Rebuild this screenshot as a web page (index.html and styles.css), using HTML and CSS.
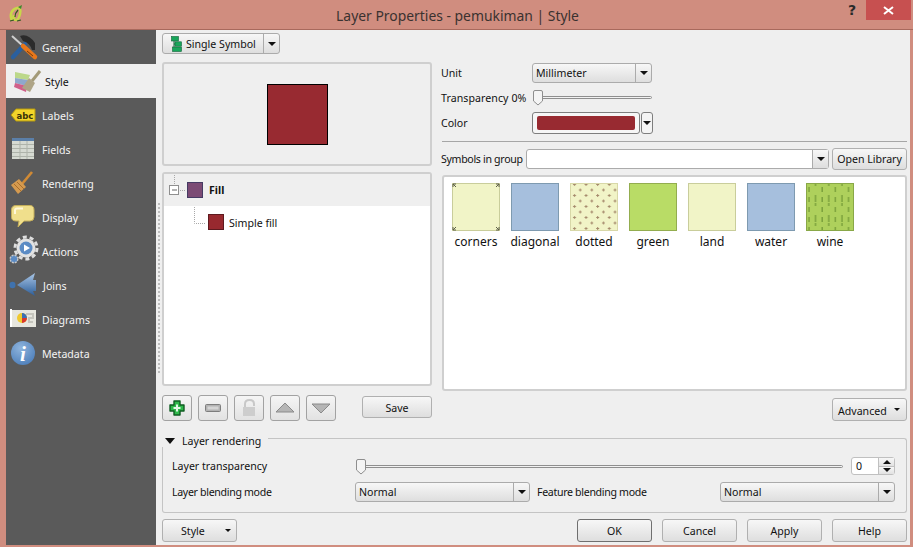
FILE: index.html
```html
<!DOCTYPE html>
<html lang="en">
<head>
<meta charset="utf-8">
<title>Layer Properties - pemukiman | Style</title>
<link rel="stylesheet" href="styles.css">
</head>
<body>
<div class="window">
  <header class="titlebar">
    <svg class="logo" width="16" height="18" viewBox="0 0 16 18"><path d="M4 15 C1 10 4 4 9 3 C12 2 13 5 12 9 C11 13 10 15 8 15 C6 15 5 13 6 10" fill="none" stroke="#c8d64a" stroke-width="2.600"/><path d="M7 12 C7 8 9 6 10 5 M2 16 L6 15 M9 16 L13 15" fill="none" stroke="#2f5a1e" stroke-width="1.200"/><path d="M10 2 L14 0 L13 4 Z" fill="#3c8a2e"/></svg>
    <span class="title">Layer Properties - pemukiman | Style</span>
    <span class="help-mark">?</span>
    <span class="close"><svg width="11" height="9" viewBox="0 0 11 9"><path d="M1 1 L10 8 M10 1 L1 8" stroke="#fff" stroke-width="2"/></svg></span>
  </header>
  <div class="body">
    <nav class="sidebar">
      <div class="nav-item"><svg class="nav-icon" viewBox="0 0 36 34"><path d="M6 6 L17 16" stroke="#cfcfcf" stroke-width="2"/><path d="M7 27 L19 14" stroke="#2a5f9e" stroke-width="4.500" stroke-linecap="round"/><path d="M14 6 Q22 3 29 13 L29 20 L26 20 Q24 13 17 11 Z" fill="#2b2b2b"/><path d="M17 16 L29 27" stroke="#e8771a" stroke-width="4.500" stroke-linecap="round"/><path d="M21 21 L27 26" stroke="#7a3b08"/></svg><span>General</span></div>
      <div class="nav-item active"><svg class="nav-icon" viewBox="0 0 36 34"><path d="M9 8 L24 11 L22 16 L9 14 Z" fill="#bcd88a"/><path d="M9 14 L22 16 L21 22 L9 19 Z" fill="#8fa8cc"/><path d="M9 19 L21 22 L20 28 L8 23 Z" fill="#d0608a"/><path d="M34 7 L26 17" stroke="#a39a78" stroke-width="3"/><path d="M23 14 L29 19 L24 28 L16 24 Z" fill="#aea486"/></svg><span>Style</span></div>
      <div class="nav-item"><svg class="nav-icon" viewBox="0 0 36 34"><path d="M5 17 L10 11 L29 11 L29 23 L10 23 Z" fill="#f4d52a" stroke="#b5990f"/><text class="abc" x="10.500" y="20.500">abc</text></svg><span>Labels</span></div>
      <div class="nav-item"><svg class="nav-icon" viewBox="0 0 36 34"><rect x="6" y="6" width="22" height="21" fill="#d6dad2"/><rect x="6" y="6" width="22" height="3" fill="#5b7fa8"/><path d="M6 12.500 H28 M6 16.500 H28 M6 20.500 H28 M6 24.500 H28 M14 9 V27 M21 9 V27" stroke="#aeb3aa"/></svg><span>Fields</span></div>
      <div class="nav-item"><svg class="nav-icon" viewBox="0 0 36 34"><path d="M26 6 L16 18" stroke="#d08a35" stroke-width="2.600"/><path d="M5 19 L13 13 L20 21 L12 28 Z" fill="#d59a4f"/><path d="M8 18 L15 25 M11 16 L18 23" stroke="#a96d2a"/></svg><span>Rendering</span></div>
      <div class="nav-item"><svg class="nav-icon" viewBox="0 0 36 34"><path d="M10 5.500 H24 Q28 5.500 28 10 V17 Q28 21 24 21 H18 L12 27 L13 21 H10 Q5.500 21 5.500 17 V10 Q5.500 5.500 10 5.500 Z" fill="#f0df8c" stroke="#c4ae5a"/><path d="M9 14 V10.500 Q9 8.500 11 8.500 H17" fill="none" stroke="#fff8d8" stroke-width="2"/></svg><span>Display</span></div>
      <div class="nav-item"><svg class="nav-icon" viewBox="0 0 36 34"><circle cx="20" cy="14" r="11" fill="none" stroke="#dedede" stroke-width="3" stroke-dasharray="4 2.900"/><circle cx="20" cy="14" r="9.500" fill="#e2e2e2"/><circle cx="20" cy="14" r="6.500" fill="#5b8bc4"/><path d="M18 10.500 L24 14 L18 17.500 Z" fill="#fff"/><circle cx="8" cy="25" r="3.800" fill="#5b8bc4" stroke="#c8c8c8" stroke-width="1.400" stroke-dasharray="2 1"/></svg><span>Actions</span></div>
      <div class="nav-item"><svg class="nav-icon" viewBox="0 0 36 34"><defs><linearGradient id="jg" x1="0" y1="0" x2="0" y2="1"><stop offset="0" stop-color="#a9c6e6"/><stop offset="1" stop-color="#2c5d99"/></linearGradient></defs><ellipse cx="6.500" cy="17" rx="3" ry="3.200" fill="#3f72ae"/><path d="M11 17 L29 5 L27 12 L30 12 L30 23 L27 23 L29 28 Z" fill="url(#jg)"/></svg><span class="joins-text">Joins</span></div>
      <div class="nav-item"><svg class="nav-icon" viewBox="0 0 36 34"><rect x="5" y="8" width="25" height="17" fill="#e6e6de"/><path d="M5 7 V25" stroke="#fff" stroke-width="2"/><path d="M20 12 H27 V16 H23 V20 H27" stroke="#c4c4bc" stroke-width="2" fill="none"/><circle cx="16" cy="16" r="5" fill="#f0c92e"/><path d="M16 16 V11 A5 5 0 0 1 21 16 Z" fill="#3b6fb5"/><path d="M16 16 H21 A5 5 0 0 1 16 21 Z" fill="#d9372c"/></svg><span>Diagrams</span></div>
      <div class="nav-item"><svg class="nav-icon" viewBox="0 0 36 34"><defs><radialGradient id="ig" cx=".4" cy=".3" r=".8"><stop offset="0" stop-color="#8fb4dd"/><stop offset="1" stop-color="#4a7cb8"/></radialGradient></defs><circle cx="17" cy="17" r="12" fill="url(#ig)"/><text class="info" x="17" y="25">i</text></svg><span>Metadata</span></div>
    </nav>
    <div class="splitter"><span class="grip"></span></div>
    <main class="main">
      <section class="top">
        <div class="left">
          <button class="combo type-btn"><span class="combo-text type-text"><svg width="11" height="16" viewBox="0 0 11 16"><path d="M3 3 V13 H6 M3 8 H6" fill="none" stroke="#11633a"/><rect x=".5" y=".5" width="7" height="4.500" fill="#18a65a" stroke="#11633a" stroke-width=".6"/><rect x="4" y="5.800" width="6.500" height="4.400" fill="#18a65a" stroke="#11633a" stroke-width=".6"/><rect x="1.500" y="11" width="9" height="4.500" fill="#18a65a" stroke="#11633a" stroke-width=".6"/></svg><span class="type-label">Single Symbol</span></span><span class="combo-arrow"><i class="arrow"></i></span></button>
          <div class="preview"><span class="big-swatch"></span></div>
          <div class="tree">
            <div class="tree-row row-fill">
              <svg width="19" height="32" viewBox="0 0 19 32"><path d="M5.500 1 V11 M11 16.500 H17" stroke="#a8a8a8" stroke-dasharray="1 1"/><rect x=".5" y="11.500" width="9" height="9" fill="#fff" stroke="#8f8f8f"/><path d="M3 16 H8" stroke="#666"/></svg>
              <span class="sw sw-fill"></span><b>Fill</b>
            </div>
            <div class="tree-row row-sub">
              <svg width="14" height="24" viewBox="0 0 14 24"><path d="M.5 1 V17.500 H11" fill="none" stroke="#a8a8a8" stroke-dasharray="1 1"/></svg>
              <span class="sw sw-simple"></span><span class="sub-text">Simple fill</span>
            </div>
          </div>
          <div class="tools">
            <button class="tool"><svg width="18" height="18" viewBox="0 0 18 18"><path d="M6 2 H12 V6 H16 V12 H12 V16 H6 V12 H2 V6 H6 Z" fill="#2eb84a" stroke="#0f5c22" stroke-width="1.400" stroke-linejoin="round"/><path d="M9 5.500 V12.500 M5.500 9 H12.500" stroke="#e4f7e6" stroke-width="2"/></svg></button>
            <button class="tool"><svg width="18" height="10" viewBox="0 0 18 10"><rect x="1.500" y="1.500" width="15" height="7" rx="1" fill="#b2b2b2" stroke="#7d7d7d"/><rect x="3.500" y="3.500" width="11" height="3" fill="#d4d4d4"/></svg></button>
            <button class="tool"><svg width="18" height="20" viewBox="0 0 18 20"><path d="M5 9 V6 Q5 2 9.500 2 Q14 2 14 6 V8" fill="none" stroke="#c8c8c8" stroke-width="2"/><rect x="3" y="9" width="12" height="9" fill="#cdcdcd"/></svg></button>
            <button class="tool"><svg width="20" height="12" viewBox="0 0 20 12"><path d="M10 1 L19 10 H1 Z" fill="#b5b5b5" stroke="#8a8a8a"/></svg></button>
            <button class="tool"><svg width="20" height="12" viewBox="0 0 20 12"><path d="M1 2 H19 L10 11 Z" fill="#b5b5b5" stroke="#8a8a8a"/></svg></button>
            <button class="btn save">Save</button>
          </div>
        </div>
        <div class="right">
          <div class="prop-row row-unit"><label>Unit</label><button class="combo unit"><span class="combo-text">Millimeter</span><span class="combo-arrow"><i class="arrow"></i></span></button></div>
          <div class="prop-row row-trans"><label class="nowrap trans-label">Transparency 0%</label><div class="slider small"><svg class="thumb" width="12" height="16" viewBox="0 0 12 16"><path d="M1.500 2 Q1.500 .5 3 .5 H9 Q10.500 .5 10.500 2 V11 L6 15 L1.500 11 Z" fill="#f4f4f4" stroke="#8e8e8e"/></svg></div></div>
          <div class="prop-row row-color"><label>Color</label><button class="color-btn"><span class="color-fill"></span></button><button class="color-drop"><i class="arrow"></i></button></div>
          <hr class="rule">
          <div class="group-row"><label>Symbols in group</label><button class="combo group-combo"><span class="combo-text"></span><span class="combo-arrow"><i class="arrow"></i></span></button><button class="btn open-lib">Open Library</button></div>
          <div class="symbols">
            <div class="symbol"><svg class="pat" width="48" height="48" viewBox="0 0 48 48"><rect x=".5" y=".5" width="47" height="47" fill="#f1f4c7" stroke="#c9cd9b"/><path d="M1 4 V1 H4 M44 1 H47 V4 M1 44 V47 H4 M44 47 H47 V44 M1 1 L4 4 M47 1 L44 4 M1 47 L4 44 M47 47 L44 44" fill="none" stroke="#5c5f48"/></svg><span>corners</span></div>
            <div class="symbol"><span class="plain blue"></span><span>diagonal</span></div>
            <div class="symbol"><svg class="pat" width="48" height="48" viewBox="0 0 48 48"><defs><pattern id="dots" width="11.600" height="11" patternUnits="userSpaceOnUse"><path d="M3 1.500 H6 M4.500 0 V3 M8.800 7 H11.800 M10.300 5.500 V8.500" stroke="#a58a6c"/></pattern></defs><rect x=".5" y=".5" width="47" height="47" fill="#f1f4c7" stroke="#d8d8a8"/><rect x="1" y="1" width="46" height="46" fill="url(#dots)"/></svg><span>dotted</span></div>
            <div class="symbol"><span class="plain green"></span><span>green</span></div>
            <div class="symbol"><span class="plain land"></span><span>land</span></div>
            <div class="symbol"><span class="plain blue"></span><span>water</span></div>
            <div class="symbol"><svg class="pat" width="48" height="48" viewBox="0 0 48 48"><defs><pattern id="wine" width="13.200" height="20" patternUnits="userSpaceOnUse"><path d="M3 4 V9 M9.600 0 V3 M9.600 12 V19 M3 14 V19" stroke="#7ca23c" stroke-width="1.500"/></pattern></defs><rect x=".5" y=".5" width="47" height="47" fill="#aed05c" stroke="#89a848"/><rect x="1" y="1" width="46" height="46" fill="url(#wine)"/></svg><span>wine</span></div>
          </div>
          <div class="adv-row"><button class="btn adv"><span class="btn-label">Advanced</span><i class="arrow tiny"></i></button></div>
        </div>
      </section>
      <section class="render-group">
        <div class="group-head"><i class="arrow big"></i><span class="group-title">Layer rendering</span><span class="group-line"></span></div>
        <div class="group-body">
          <div class="g-row g-first"><label class="g-label">Layer transparency</label><div class="slider wide"><svg class="thumb" width="12" height="16" viewBox="0 0 12 16"><path d="M1.500 2 Q1.500 .5 3 .5 H9 Q10.500 .5 10.500 2 V11 L6 15 L1.500 11 Z" fill="#f4f4f4" stroke="#8e8e8e"/></svg></div>
            <div class="spin"><span class="spin-val">0</span><span class="spin-btns"><span class="spin-b"><i class="arrow up"></i></span><span class="spin-b"><i class="arrow"></i></span></span></div>
          </div>
          <div class="g-row"><label class="g-label tight">Layer blending mode</label><button class="combo blend"><span class="combo-text">Normal</span><span class="combo-arrow"><i class="arrow"></i></span></button><label class="g-label2 tight">Feature blending mode</label><button class="combo blend"><span class="combo-text">Normal</span><span class="combo-arrow"><i class="arrow"></i></span></button></div>
        </div>
      </section>
      <footer class="footer">
        <button class="btn style-btn">Style<i class="arrow tiny"></i></button>
        <span class="spacer"></span>
        <button class="btn foot default">OK</button>
        <button class="btn foot">Cancel</button>
        <button class="btn foot">Apply</button>
        <button class="btn foot">Help</button>
      </footer>
    </main>
  </div>
</div>
</body>
</html>
```
FILE: styles.css
```css
* { box-sizing: border-box; }
html, body { margin: 0; padding: 0; }
body { width: 913px; height: 547px; overflow: hidden; font: 10.600px "Noto Sans", "Liberation Sans", sans-serif; color: #111; background: #d08d7f; }
button { font: inherit; color: inherit; padding: 0; margin: 0; }
label { display: block; }
.nowrap { white-space: nowrap; }
.tight { letter-spacing: -.32px; }
.window { width: 913px; height: 547px; display: flex; flex-direction: column; padding: 0 3px 2px 6px; }
.titlebar { position: relative; height: 30px; flex: none; display: flex; justify-content: center; padding: 6px 0 0 2px; border-bottom: 1px solid #a8695c; margin-right: -3px; margin-left: -6px; }
.logo { position: absolute; left: 8px; top: 5px; }
.title { font-size: 13.900px; line-height: 19px; color: #3a3230; }
.help-mark { position: absolute; left: 848px; top: 1px; font: bold 14px/18px "DejaVu Sans", sans-serif; color: #2a2a2a; }
.close { position: absolute; left: 866px; top: 0; width: 45px; height: 20px; background: #c75050; display: flex; align-items: center; justify-content: center; }
.body { flex: 1; display: flex; min-height: 0; background: #efefef; }
.sidebar { width: 150px; flex: none; background: #5a5a5a; color: #f4f4f4; }
.nav-item { height: 34px; display: flex; align-items: center; }
.nav-item span { padding-top: 2px; }
.nav-item .joins-text { margin-left: 1px; }
.nav-item.active { background: #efefef; color: #111; }
.nav-item.active span { margin-left: 3px; }
.nav-icon { width: 36px; height: 34px; flex: none; }
.abc { font: bold 8.500px "DejaVu Sans", sans-serif; fill: #3a3208; }
.info { font: italic bold 21px "Liberation Serif", serif; fill: #fff; text-anchor: middle; }
.splitter { width: 6px; flex: none; display: flex; align-items: center; justify-content: center; }
.grip { width: 2px; height: 170px; background: repeating-linear-gradient(#bdbdbd 0 2px, transparent 2px 4px); }
.main { flex: 1; min-width: 0; display: flex; flex-direction: column; padding: 3px 3px 0 0; }
.top { display: flex; height: 388px; flex: none; }
.left { width: 270px; flex: none; display: flex; flex-direction: column; }
.right { flex: 1; min-width: 0; margin-left: 9px; padding-top: 30px; display: flex; flex-direction: column; }
.combo { display: flex; align-items: stretch; height: 20px; padding: 0; border: 1px solid #ababab; border-radius: 3px; background: linear-gradient(#f7f7f7, #dedede); text-align: left; }
.combo-text { flex: 1; min-width: 0; padding-left: 3px; line-height: 17px; display: flex; align-items: center; }
.combo-arrow { width: 16px; flex: none; border-left: 1px solid #ababab; display: flex; align-items: center; justify-content: center; }
.arrow { display: block; width: 0; height: 0; border-left: 4px solid transparent; border-right: 4px solid transparent; border-top: 4px solid #111; }
.arrow.up { border-top: 0; border-bottom: 4px solid #111; }
.arrow.tiny { border-left-width: 3px; border-right-width: 3px; border-top-width: 3px; }
.arrow.big { border-left-width: 5.500px; border-right-width: 5.500px; border-top-width: 6px; }
.type-btn { width: 118px; height: 21px; flex: none; }
.type-text { padding-left: 8px; gap: 4px; }
.type-label { padding-top: 2px; }
.preview { height: 104px; flex: none; margin-top: 8px; border: 2px solid #cfcfcf; border-radius: 3px; display: flex; align-items: center; justify-content: center; }
.big-swatch { width: 61px; height: 61px; margin-top: 1px; background: #982a31; border: 1px solid #000; }
.tree { height: 214px; flex: none; margin-top: 6px; border: 2px solid #cfcfcf; border-radius: 3px; background: #fff; }
.tree-row { display: flex; align-items: center; }
.row-fill { height: 32px; background: #efefef; padding-left: 5px; }
.row-fill b { margin-left: 6px; font-weight: 700; }
.row-sub { height: 24px; padding-left: 30px; align-items: flex-start; }
.row-sub > svg { flex: none; }
.sub-text { margin: 9px 0 0 5px; line-height: 16px; }
.row-sub .sw { margin-top: 8px; }
.sw { width: 16px; height: 16px; flex: none; display: block; }
.sw-fill { background: #7b4a74; border: 1px solid #453a63; margin-left: -1px; }
.sw-simple { background: #98292f; border: 1px solid #5e1a1f; }
.tools { display: flex; gap: 6px; margin-top: 9px; align-items: flex-start; }
.tool { width: 30px; height: 26px; flex: none; border: 1px solid #a2a2a2; border-radius: 3px; background: linear-gradient(#f5f5f5, #e2e2e2); display: flex; align-items: center; justify-content: center; }
.btn { height: 23px; border: 1px solid #b0b0b0; border-radius: 3px; background: linear-gradient(#f7f7f7, #dedede); text-align: center; }
.save { width: 70px; height: 22px; flex: none; margin-left: 20px; margin-top: 1px; padding-top: 2px; }
.prop-row { display: flex; align-items: center; flex: none; }
.prop-row label { width: 91px; flex: none; }
.trans-label { letter-spacing: .07px; }
.unit { width: 120px; }
.row-trans { margin-top: 7px; height: 15px; }
.slider { position: relative; height: 3px; background: #f2f2f2; border: 1px solid #8f8f8f; border-radius: 2px; }
.thumb { position: absolute; left: -6px; top: -7px; display: block; }
.slider.small { width: 115px; margin-left: 5px; }
.row-color { margin-top: 7px; height: 22px; }
.color-btn { width: 108px; height: 22px; border: 1px solid #7e7e7e; border-radius: 3px; background: #f6f6f6; padding: 3px 4px; }
.color-fill { display: block; height: 100%; background: #982a31; border-radius: 2px; }
.color-drop { width: 12px; height: 22px; margin-left: 1px; border: 1px solid #7e7e7e; border-radius: 3px; background: #f4f4f4; display: flex; align-items: center; justify-content: center; }
.rule { height: 1px; width: 465px; margin: 7px 0 0 1px; border: 0; background: #a6a6a6; flex: none; }
.group-row { display: flex; align-items: center; margin-top: 6px; height: 22px; flex: none; }
.group-row label { width: 85px; flex: none; white-space: nowrap; letter-spacing: -.32px; }
.group-combo { width: 303px; background: #fff; }
.group-combo .combo-arrow { background: linear-gradient(#f7f7f7, #dedede); }
.open-lib { width: 75px; height: 22px; margin-left: 3px; flex: none; }
.symbols { height: 216px; width: 465px; flex: none; margin: 5px 0 0 1px; border: 2px solid #cfcfcf; border-radius: 3px; background: #fff; display: flex; align-items: flex-start; padding: 6px 0 0 3px; font-size: 12px; }
.symbol { width: 59px; padding-right: 1px; flex: none; display: flex; flex-direction: column; align-items: center; white-space: nowrap; line-height: 16px; gap: 3px; }
.pat, .plain { width: 48px; height: 48px; display: block; flex: none; }
.blue { background: #a6bfdd; border: 1px solid #7e9ab0; }
.green { background: #b9dc66; border: 1px solid #93ad4f; }
.land { background: #f1f4c7; border: 1px solid #c9cd9b; }
.adv-row { display: flex; justify-content: flex-end; margin-top: 7px; }
.adv { width: 75px; display: flex; align-items: center; justify-content: space-between; padding: 0 6px 0 5px; }
.btn-label { padding-top: 2px; }
.render-group { margin-top: 12px; flex: none; }
.group-head { height: 14px; display: flex; align-items: flex-start; padding-left: 3px; }
.group-head .arrow { margin-top: 5px; }
.group-title { margin-left: 7px; line-height: 14px; padding-top: 1px; }
.group-line { flex: 1; height: 14px; margin: 5px 0 0 7px; border-top: 1px solid #c4c4c4; border-right: 1px solid #c4c4c4; border-top-right-radius: 3px; }
.group-body { height: 66px; border: 1px solid #c4c4c4; border-top: 0; border-radius: 0 0 3px 3px; padding: 10px 11px 0 9px; }
.g-row { display: flex; align-items: center; height: 20px; }
.g-first { margin-bottom: 7px; height: 18px; }
.g-label { width: 183px; flex: none; }
.g-label2 { width: 190px; flex: none; padding-left: 7px; }
.slider.wide { flex: 1; margin-left: 5px; }
.spin { width: 44px; height: 18px; margin-left: 8px; flex: none; border: 1px solid #c0c0c0; border-radius: 3px; background: #fff; display: flex; }
.spin-val { flex: 1; padding-left: 4px; line-height: 16px; }
.spin-btns { width: 16px; display: flex; flex-direction: column; border-left: 1px solid #c0c0c0; }
.spin-b { flex: 1; display: flex; align-items: center; justify-content: center; background: linear-gradient(#f7f7f7, #e2e2e2); }
.spin-b + .spin-b { border-top: 1px solid #c0c0c0; }
.blend { width: 175px; flex: none; }
.footer { display: flex; gap: 10px; margin-top: 6px; height: 23px; flex: none; }
.spacer { flex: 1; }
.style-btn { width: 75px; display: flex; align-items: center; justify-content: space-between; padding: 0 5px 0 18px; }
.foot { width: 75px; }
.default { border-color: #6f6f6f; }
```
